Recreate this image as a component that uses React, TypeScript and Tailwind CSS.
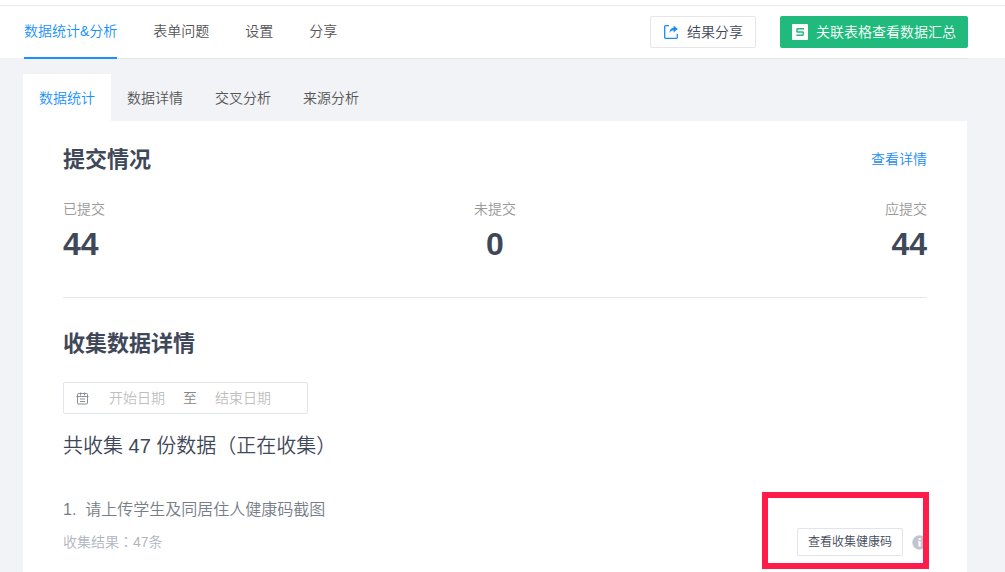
import React from "react";

const NAV = ["数据统计&分析", "表单问题", "设置", "分享"];
const TABS = ["数据统计", "数据详情", "交叉分析", "来源分析"];

function ShareIcon() {
  return (
    <svg width="15" height="14" viewBox="0 0 15 14" fill="none" aria-hidden="true">
      <path d="M5 .7H1.500a.8.8 0 0 0-.8.8v11a.8.8 0 0 0 .8.8h11a.8.8 0 0 0 .8-.8V9" stroke="#1a8cf5" strokeWidth="1.300" />
      <path d="M9.600.4 13.800 4 9.600 7.500V5.200C7.800 5.200 6.500 6 5.500 8 5.600 4.800 7 3 9.600 2.800Z" fill="#1a8cf5" />
    </svg>
  );
}

function SheetIcon() {
  return (
    <svg width="16" height="16" viewBox="0 0 16 16" fill="none" aria-hidden="true">
      <rect width="16" height="16" rx="1" fill="#fff" />
      <path d="M12 4.800H5.600q-.6 0-.6.600v2q0 .6.600.6h5q.6 0 .6.600v2q0 .6-.6.600H4.300" stroke="#21ba7d" strokeWidth="1.500" />
    </svg>
  );
}

function CalendarIcon() {
  return (
    <svg width="13" height="13" viewBox="0 0 13 13" fill="none" stroke="#8b8f96" aria-hidden="true">
      <rect x="1.500" y="1.500" width="10" height="10.500" rx="0.800" />
      <path d="M0.500 4.500h12M4.500.5v3M8.500.5v3M4 7h5M4 9.500h5" />
    </svg>
  );
}

function InfoIcon() {
  return (
    <svg width="15" height="15" viewBox="0 0 15 15" aria-hidden="true">
      <circle cx="7.500" cy="7.500" r="7.200" fill="#bfc4ce" />
      <path d="M6.500 3h2.200v2H6.500zM6 6.200h2.700v5.300H6.500V7.200H6z" fill="#fff" />
    </svg>
  );
}

function Stat({ label, value, align }: { label: string; value: number; align: string }) {
  return (
    <div className={align}>
      <dt className="text-sm leading-6 text-[#999]">{label}</dt>
      <dd className="mt-[3px] text-[32px] leading-10 font-bold">{value}</dd>
    </div>
  );
}

export default function App() {
  return (
    <div className="flex min-h-screen flex-col bg-[#f2f3f7] font-['Liberation_Sans','Noto_Sans_CJK_SC',sans-serif] text-sm font-[350] text-[#3f4859]">
      <header className="h-[58px] bg-white pt-[5px]">
        <div className="border-t border-[#e8e8e8] pr-[37px] pl-6">
          <div className="flex h-[53px] justify-between border-b border-[#e4e5e7]">
            <nav className="-mb-px flex gap-9">
              {NAV.map((item, i) => (
                <a
                  key={item}
                  href="#"
                  className={
                    i === 0
                      ? "flex items-center border-b-2 border-[#1890ff] pb-px text-[#1890ff]"
                      : "flex items-center border-b-2 border-transparent pb-px text-[#555]"
                  }
                >
                  {item}
                </a>
              ))}
            </nav>
            <div className="flex items-center gap-6">
              <button className="flex h-8 items-center gap-2 rounded-xs border border-[#e6e6e8] bg-white pr-3 pl-[13px]">
                <ShareIcon />
                结果分享
              </button>
              <button className="flex h-8 items-center gap-2 rounded-xs bg-[#21ba7d] px-3 text-white">
                <SheetIcon />
                关联表格查看数据汇总
              </button>
            </div>
          </div>
        </div>
      </header>

      <main className="mr-[38px] ml-[23px] flex grow flex-col pt-4">
        <div className="flex">
          {TABS.map((tab, i) => (
            <button
              key={tab}
              className={i === 0 ? "h-[47px] bg-white px-4 text-[#1890ff]" : "h-[47px] px-4 text-[#555]"}
            >
              {tab}
            </button>
          ))}
        </div>

        <div className="grow bg-white px-10 pt-[23px]">
          <section className="border-b border-[#e6e6e8] pb-[33px]">
            <div className="flex items-start justify-between">
              <h2 className="text-[22px] leading-8 font-bold">提交情况</h2>
              <a href="#" className="leading-[30px] text-[#1a8cf5]">查看详情</a>
            </div>
            <dl className="mt-[21px] grid grid-cols-3">
              <Stat label="已提交" value={44} align="text-left" />
              <Stat label="未提交" value={0} align="text-center" />
              <Stat label="应提交" value={44} align="text-right" />
            </dl>
          </section>

          <section className="pt-[30px]">
            <h2 className="text-[22px] leading-8 font-bold">收集数据详情</h2>
            <div className="mt-[22px] flex h-8 w-[245px] items-center rounded-xs border border-[#e0e5ea] pl-3">
              <CalendarIcon />
              <input
                aria-label="开始日期"
                placeholder="开始日期"
                className="ml-5 w-14 outline-none placeholder:text-[#bfbfbf]"
              />
              <span className="mx-[18px] text-[#888]">至</span>
              <input
                aria-label="结束日期"
                placeholder="结束日期"
                className="w-14 outline-none placeholder:text-[#bfbfbf]"
              />
            </div>
            <p className="mt-4 text-xl leading-8">共收集 47 份数据（正在收集）</p>

            <div className="mt-9 flex justify-between">
              <div>
                <h3 className="flex gap-[9px] text-base leading-6 font-[350] text-[#777e88]">
                  <span>1.</span>
                  <span>请上传学生及同居住人健康码截图</span>
                </h3>
                <p className="mt-2 leading-[22px] text-[#afb5c0]">
                  收集结果<span className="font-['Noto_Sans_CJK_TC',sans-serif]">：</span>47条
                </p>
              </div>
              <div className="relative mt-[30px] flex h-7 items-center gap-[9px]">
                <button className="h-7 rounded-xs border border-[#dfe4ee] bg-white px-[10px] text-xs">
                  查看收集健康码
                </button>
                <InfoIcon />
                <div className="pointer-events-none absolute -top-9 -right-0.5 -bottom-[13px] -left-[35px] border-6 border-[#ff1b4a]" />
              </div>
            </div>
          </section>
        </div>
      </main>
    </div>
  );
}
